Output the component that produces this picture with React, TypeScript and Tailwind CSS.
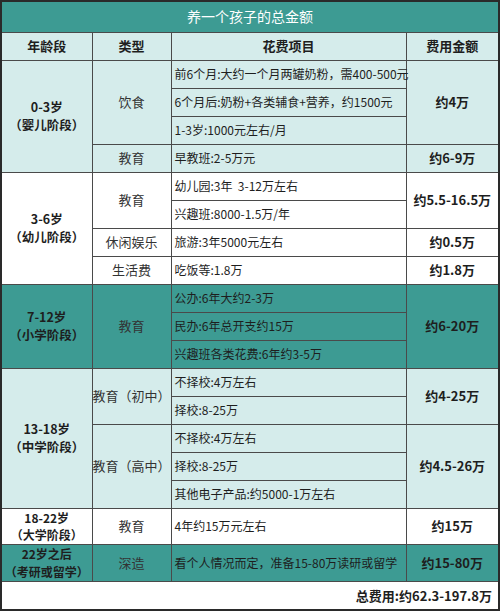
const TEAL = "bg-[#3d9b93]";
const LIGHT = "bg-[#d5eceb]";
const WHITE = "bg-white";

type Section = {
  age: string;
  stage: string;
  bg: string;
  groups: { type: string; items: string[]; amount: string }[];
  rowH: string;
  ageText: string;
};

const BIG = "text-[12.5px] leading-[18px]";
const SMALL = "text-[12px] leading-[17.5px]";

const sections: Section[] = [
  {
    age: "0-3岁",
    stage: "（婴儿阶段）",
    bg: LIGHT,
    rowH: "h-[28px]",
    ageText: BIG,
    groups: [
      {
        type: "饮食",
        items: [
          "前6个月:大约一个月两罐奶粉，需400-500元",
          "6个月后:奶粉+各类辅食+营养，约1500元",
          "1-3岁:1000元左右/月",
        ],
        amount: "约4万",
      },
      { type: "教育", items: ["早教班:2-5万元"], amount: "约6-9万" },
    ],
  },
  {
    age: "3-6岁",
    stage: "（幼儿阶段）",
    bg: WHITE,
    rowH: "h-[28px]",
    ageText: BIG,
    groups: [
      {
        type: "教育",
        items: ["幼儿园:3年  3-12万左右", "兴趣班:8000-1.5万/年"],
        amount: "约5.5-16.5万",
      },
      { type: "休闲娱乐", items: ["旅游:3年5000元左右"], amount: "约0.5万" },
      { type: "生活费", items: ["吃饭等:1.8万"], amount: "约1.8万" },
    ],
  },
  {
    age: "7-12岁",
    stage: "（小学阶段）",
    bg: TEAL,
    rowH: "h-[28px]",
    ageText: BIG,
    groups: [
      {
        type: "教育",
        items: ["公办:6年大约2-3万", "民办:6年总开支约15万", "兴趣班各类花费:6年约3-5万"],
        amount: "约6-20万",
      },
    ],
  },
  {
    age: "13-18岁",
    stage: "（中学阶段）",
    bg: LIGHT,
    rowH: "h-[28px]",
    ageText: BIG,
    groups: [
      {
        type: "教育（初中）",
        items: ["不择校:4万左右", "择校:8-25万"],
        amount: "约4-25万",
      },
      {
        type: "教育（高中）",
        items: ["不择校:4万左右", "择校:8-25万", "其他电子产品:约5000-1万左右"],
        amount: "约4.5-26万",
      },
    ],
  },
  {
    age: "18-22岁",
    stage: "（大学阶段）",
    bg: WHITE,
    rowH: "h-[36px]",
    ageText: SMALL,
    groups: [{ type: "教育", items: ["4年约15万元左右"], amount: "约15万" }],
  },
  {
    age: "22岁之后",
    stage: "（考研或留学）",
    bg: TEAL,
    rowH: "h-[37px]",
    ageText: SMALL,
    groups: [
      { type: "深造", items: ["看个人情况而定，准备15-80万读研或留学"], amount: "约15-80万" },
    ],
  },
];

const cell = "border border-[#4a4a4a] p-0";

export default function App() {
  return (
    <div className="w-[500px] h-[612px] bg-white font-['Noto_Sans_CJK_SC',sans-serif] text-[#1e1e1e]">
      <table className="w-[500px] border-collapse table-fixed border-2 border-[#2a2a2a]">
        <colgroup>
          <col className="w-[91px]" />
          <col className="w-[79px]" />
          <col className="w-[235px]" />
          <col />
        </colgroup>
        <tbody>
          <tr className="h-[31px]">
            <td colSpan={4} className={`${cell} ${TEAL} text-center text-white text-[14px]`}>
              养一个孩子的总金额
            </td>
          </tr>
          <tr className={`h-[28px] ${LIGHT} text-[13px] font-bold`}>
            <td className={`${cell} text-center`}>年龄段</td>
            <td className={`${cell} text-center`}>类型</td>
            <td className={`${cell} text-center`}>花费项目</td>
            <td className={`${cell} text-center`}>费用金额</td>
          </tr>
          {sections.map((s) => {
            const total = s.groups.reduce((n, g) => n + g.items.length, 0);
            const rows: React.ReactNode[] = [];
            s.groups.forEach((g, gi) => {
              g.items.forEach((item, ii) => {
                rows.push(
                  <tr key={`${s.age}-${gi}-${ii}`} className={`${s.rowH} ${s.bg}`}>
                    {gi === 0 && ii === 0 && (
                      <td rowSpan={total} className={`${cell} text-center font-bold ${s.ageText}`}>
                        <div>{s.age}</div>
                        <div>{s.stage}</div>
                      </td>
                    )}
                    {ii === 0 && (
                      <td rowSpan={g.items.length} className={`${cell} text-center text-[13px] text-[#333]`}>
                        {g.type}
                      </td>
                    )}
                    <td className={`${cell} pl-[3px] text-[12px] whitespace-pre`}>{item}</td>
                    {ii === 0 && (
                      <td rowSpan={g.items.length} className={`${cell} text-center text-[13px] font-bold`}>
                        {g.amount}
                      </td>
                    )}
                  </tr>
                );
              });
            });
            return rows;
          })}
          <tr className="h-[29px] bg-white">
            <td colSpan={4} className={`${cell} text-right pr-[6px] text-[13px] font-bold`}>
              总费用:约62.3-197.8万
            </td>
          </tr>
        </tbody>
      </table>
    </div>
  );
}
